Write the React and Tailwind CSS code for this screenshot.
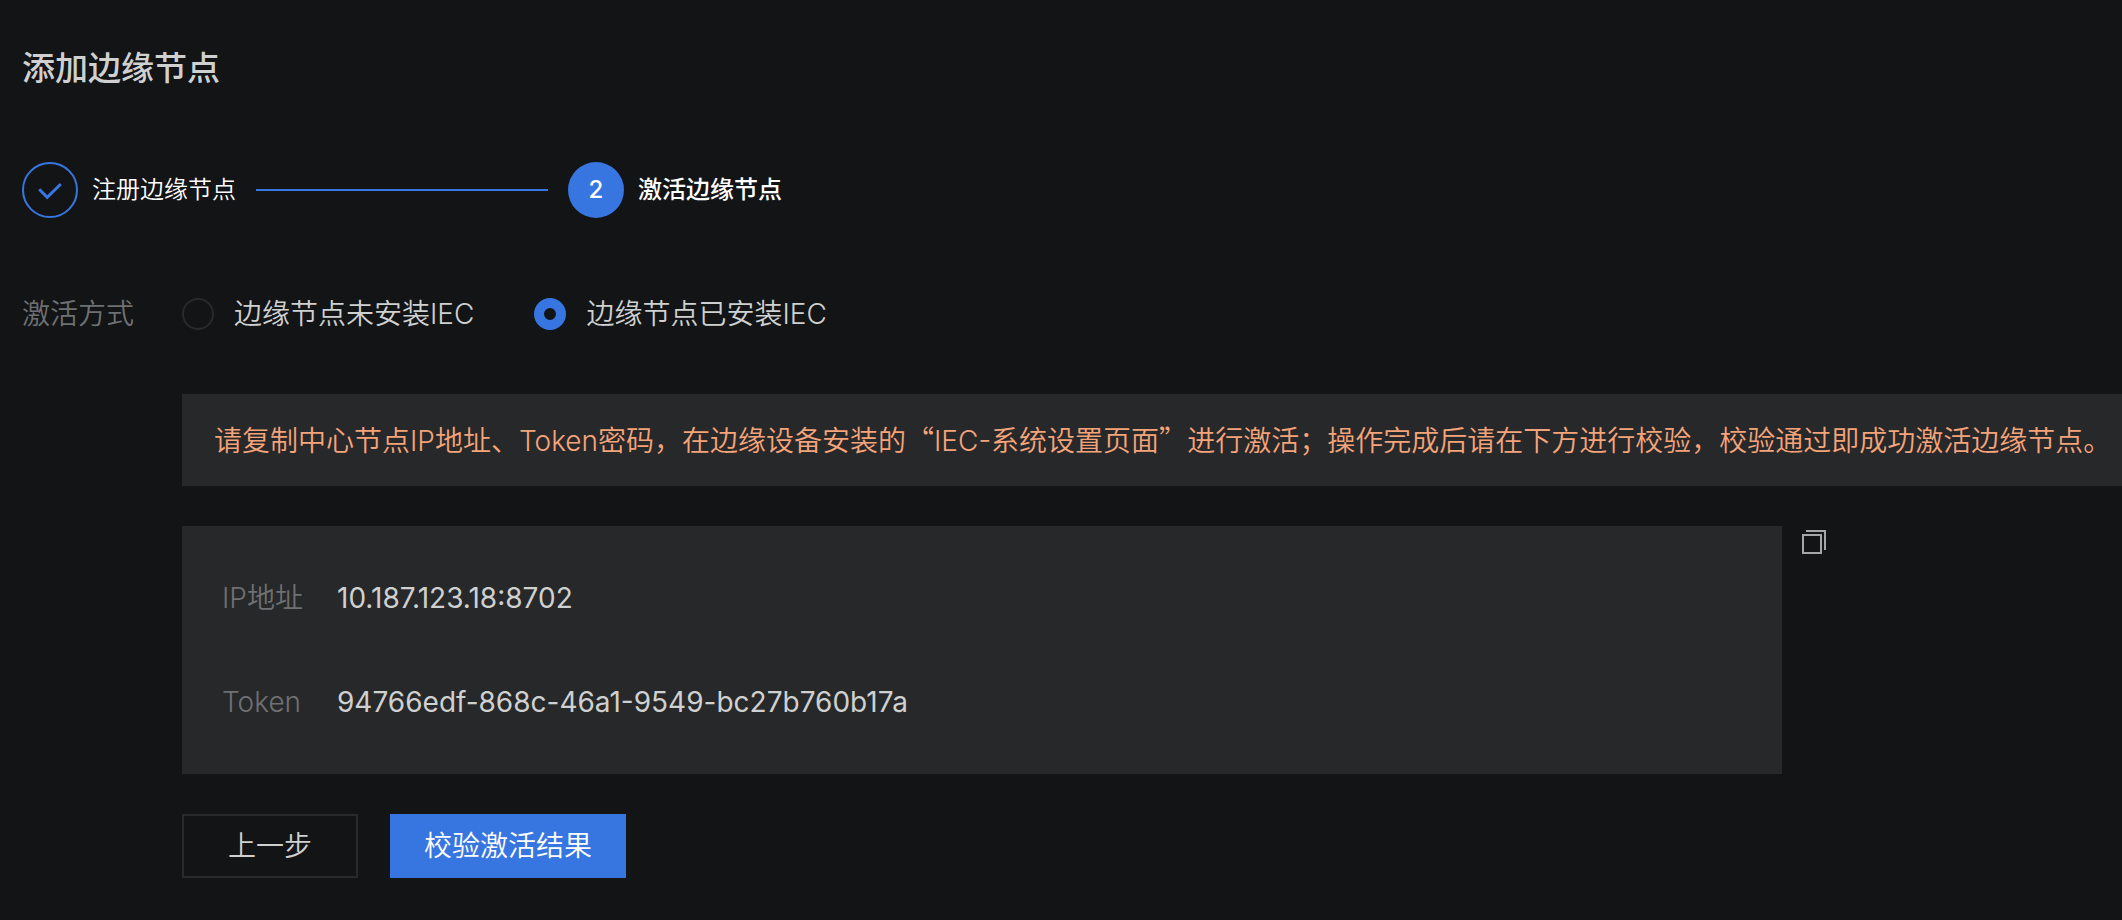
import React, { useState } from "react";

const methods = [
  { id: "fresh", label: "边缘节点未安装IEC" },
  { id: "installed", label: "边缘节点已安装IEC" },
];

const nodeInfo = [
  { label: "IP地址", value: "10.187.123.18:8702" },
  { label: "Token", value: "94766edf-868c-46a1-9549-bc27b760b17a" },
];

const CheckIcon = () => (
  <svg width="24" height="20" viewBox="0 0 24 20" fill="none">
    <path d="M1.2 9.2 L9.2 17.4 L22.8 4" stroke="#3776e1" strokeWidth="3" />
  </svg>
);

const CopyIcon = () => (
  <svg width="24" height="24" viewBox="0 0 24 24" fill="none">
    <path d="M1 5h18v18H1z" stroke="#a5a6a7" strokeWidth="2" />
    <path d="M4 1h19v19" stroke="#a5a6a7" strokeWidth="2" />
  </svg>
);

const App = () => {
  const [method, setMethod] = useState("installed");

  const copy = () => {
    const text = nodeInfo.map((row) => `${row.label} ${row.value}`).join("\n");
    navigator.clipboard?.writeText(text);
  };

  return (
    <main
      lang="zh-CN"
      className="min-h-screen bg-[#121416] pt-11 pb-10 pl-[22px] font-['Inter','Noto_Sans_CJK_SC',sans-serif] text-[28px] leading-10 font-[350] text-[#cfd0d0]"
    >
      <h1 className="text-[33px] leading-12 font-medium">添加边缘节点</h1>

      <ol className="mt-[70px] flex items-center text-2xl text-white">
        <li className="flex items-center gap-3.5">
          <span className="flex size-14 items-center justify-center rounded-full border-2 border-[#3776e1]">
            <CheckIcon />
          </span>
          <span>注册边缘节点</span>
          <span className="mr-5 ml-1.5 h-0.5 w-[292px] bg-[#3776e1]" />
        </li>
        <li className="flex items-center gap-3.5 font-medium">
          <span className="flex size-14 items-center justify-center rounded-full bg-[#3776e1]">
            2
          </span>
          <span>激活边缘节点</span>
        </li>
      </ol>

      <form onSubmit={(e) => e.preventDefault()}>
        <fieldset className="mt-19 flex items-center">
          <legend className="float-left w-40 text-[#6f7072]">激活方式</legend>
          <div className="flex gap-15">
            {methods.map((m) => (
              <label
                key={m.id}
                className="flex cursor-pointer items-center gap-5"
              >
                <input
                  type="radio"
                  name="method"
                  value={m.id}
                  checked={method === m.id}
                  onChange={() => setMethod(m.id)}
                  className="size-8 appearance-none rounded-full border-2 border-[#292a2c] checked:border-10 checked:border-[#3776e1]"
                />
                {m.label}
              </label>
            ))}
          </div>
        </fieldset>

        <div className="ml-40">
          <p className="mt-15 bg-[#27282a] px-8 py-[25px] whitespace-nowrap text-[#f5a47a]">
            请复制中心节点IP地址、Token密码，在边缘设备安装的
            <span className="font-['Noto_Sans_CJK_SC',sans-serif]">“</span>
            IEC-系统设置页面
            <span className="font-['Noto_Sans_CJK_SC',sans-serif]">”</span>
            进行激活；操作完成后请在下方进行校验，校验通过即成功激活边缘节点。
          </p>

          <div className="mt-10 flex items-start gap-5">
            <dl className="flex max-w-[1600px] flex-1 flex-col gap-16 bg-[#27282a] px-10 py-13">
              {nodeInfo.map((row) => (
                <div key={row.label} className="flex">
                  <dt className="w-[115px] text-[#6f7072]">{row.label}</dt>
                  <dd className="font-normal">{row.value}</dd>
                </div>
              ))}
            </dl>
            <button
              type="button"
              aria-label="复制"
              onClick={copy}
              className="mt-1 cursor-pointer"
            >
              <CopyIcon />
            </button>
          </div>

          <div className="mt-10 flex gap-8">
            <button
              type="button"
              className="h-16 cursor-pointer border-2 border-[#292a2c] px-11"
            >
              上一步
            </button>
            <button
              type="submit"
              className="h-16 cursor-pointer bg-[#3776e1] px-[34px] text-white"
            >
              校验激活结果
            </button>
          </div>
        </div>
      </form>
    </main>
  );
};

export default App;
